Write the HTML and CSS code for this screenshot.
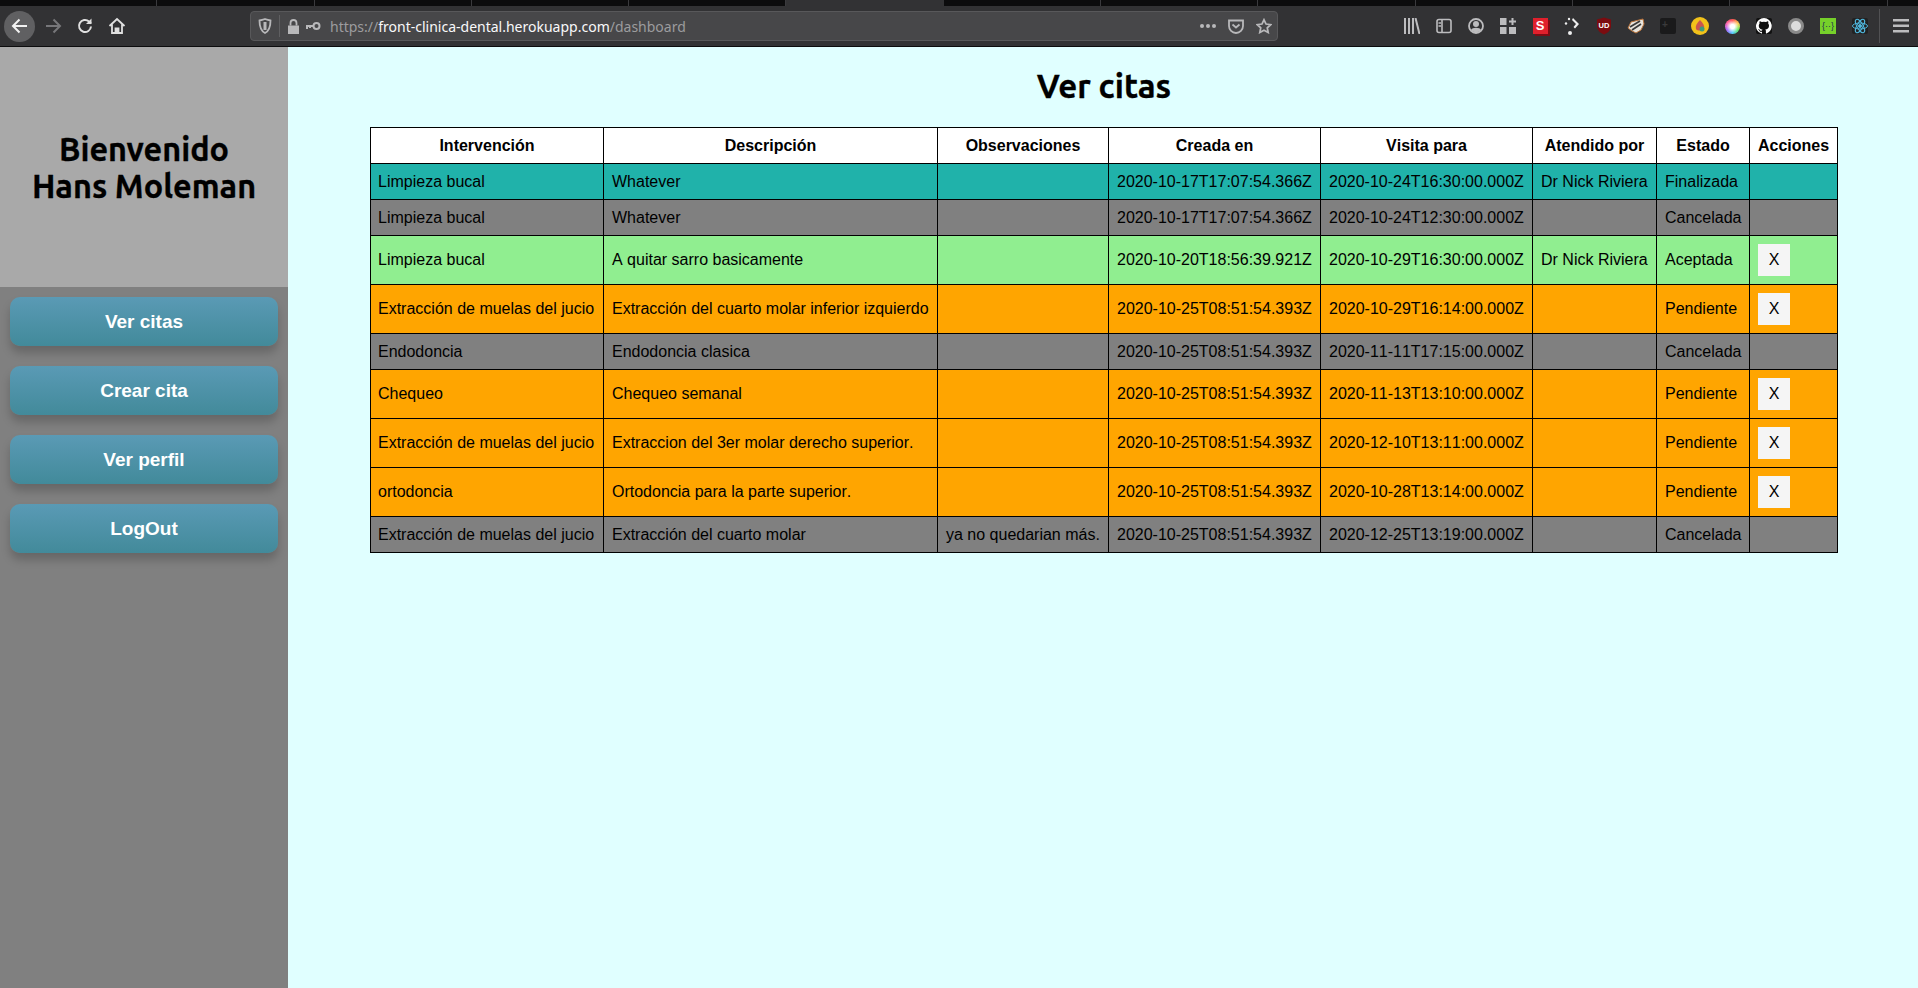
FILE: index.html
```html
<!DOCTYPE html>
<html lang="es">
<head>
  <meta charset="UTF-8" />
  <title>Ver citas</title>
  <link rel="stylesheet" href="styles.css">
</head>
<body>

<!-- Browser chrome -->
<div class="tabstrip">
  <span class="tab-sep"></span><span class="tab-sep"></span><span class="tab-sep"></span><span class="tab-sep"></span>
  <span class="tab-sep"></span><span class="tab-active"></span><span class="tab-sep"></span><span class="tab-sep"></span>
  <span class="tab-sep"></span><span class="tab-sep"></span><span class="tab-sep"></span><span class="tab-sep"></span>
</div>
<div class="toolbar">
  <div class="nav-buttons">
    <span class="back-btn">
      <svg width="20" height="20" viewBox="0 0 20 20" fill="none" stroke="#f2f2f2" stroke-width="2"><path d="M17 10H3M9.500 3.500 3 10l6.500 6.500"/></svg>
    </span>
    <svg class="nav-forward" width="20" height="20" viewBox="0 0 20 20" fill="none" stroke="#77777a" stroke-width="2"><path d="M3 10h14M10.500 3.500 17 10l-6.500 6.500"/></svg>
    <svg class="nav-reload" width="18" height="18" viewBox="0 0 18 18" fill="none" stroke="#e0e0e0" stroke-width="2"><path d="M15 9.500A6 6 0 1 1 13 4.500L15 6.500"/><path d="M15.500 1.500V7H10" fill="#e0e0e0" stroke="none"/></svg>
    <svg class="nav-home" width="18" height="18" viewBox="0 0 18 18" fill="none" stroke="#e0e0e0" stroke-width="1.800"><path d="M1.500 9 9 2l7.500 7M4 7.500V16h10V7.500"/><path d="M7.500 16v-4.500h3V16" fill="#e0e0e0"/></svg>
  </div>
  <div class="urlbar">
    <svg width="14" height="16" viewBox="0 0 14 16" fill="none" stroke="#b8b8ba" stroke-width="1.800"><path d="M1.500 2.500C4 2 5.500 1.500 7 1c1.500.5 3 1 5.500 1.500C12.500 9 11 13 7 15 3 13 1.500 9 1.500 2.500Z"/><path d="M7 4v8" stroke-width="3"/></svg>
    <span class="url-sep"></span>
    <svg width="13" height="15" viewBox="0 0 13 15"><path d="M1 6.500h11V15H1Z" fill="#b8b8ba"/><path d="M3.500 6.500V4a3 3 0 0 1 6 0v2.500" fill="none" stroke="#b8b8ba" stroke-width="1.800"/></svg>
    <svg class="key" width="16" height="10" viewBox="0 0 16 10" fill="none" stroke="#b8b8ba"><circle cx="11.500" cy="5" r="3" stroke-width="2"/><path d="M8 5H1M2 5v3M5 5v2" stroke-width="2"/></svg>
    <span class="url"><span class="url-dim">https://</span>front-clinica-dental.herokuapp.com<span class="url-dim">/dashboard</span></span>
    <svg class="url-dots" width="16" height="4" viewBox="0 0 16 4" fill="#b8b8ba"><circle cx="2" cy="2" r="2"/><circle cx="8" cy="2" r="2"/><circle cx="14" cy="2" r="2"/></svg>
    <svg width="16" height="15" viewBox="0 0 16 15" fill="none" stroke="#b8b8ba" stroke-width="1.800"><path d="M1 1.500h14V7A7 7 0 0 1 1 7Z"/><path d="m4.500 5.500 3.500 3 3.500-3"/></svg>
    <svg class="star" width="16" height="16" viewBox="0 0 18 17" fill="none" stroke="#b8b8ba" stroke-width="2"><path d="m9 1.500 2.300 4.800 5.200.7-3.800 3.600 1 5.200L9 13.300l-4.700 2.500 1-5.200L1.500 7l5.200-.7Z"/></svg>
  </div>
  <div class="addons">
    <svg width="16" height="16" viewBox="0 0 16 16" fill="none" stroke="#bcbcbe" stroke-width="2"><path d="M1 0v16M5 0v16M9 0v16M11.500 0 15.500 16"/></svg>
    <svg width="16" height="16" viewBox="0 0 16 16" fill="none" stroke="#bcbcbe" stroke-width="1.600"><rect x="1" y="1.500" width="14" height="13" rx="2"/><path d="M6 1.500v13M2.500 5H5M2.500 8H5" /></svg>
    <svg width="16" height="16" viewBox="0 0 16 16"><circle cx="8" cy="8" r="7" fill="none" stroke="#bcbcbe" stroke-width="1.800"/><circle cx="8" cy="6" r="3" fill="#bcbcbe"/><path d="M3 12c1-3 9-3 10 0-2 3-8 3-10 0Z" fill="#bcbcbe"/></svg>
    <svg width="16" height="16" viewBox="0 0 16 16" fill="#bcbcbe"><rect x="0" y="0" width="6.500" height="7"/><rect x="0" y="9" width="6.500" height="7"/><rect x="9" y="9" width="7" height="7"/><path d="M11.500 0h2v2.500H16v2h-2.500V7h-2V4.500H9v-2h2.500Z"/></svg>
    <span class="addon-s">S</span>
    <svg width="16" height="18" viewBox="0 0 16 18" fill="#eee"><circle cx="5" cy="2" r="1.200"/><circle cx="2" cy="6.500" r="1.200"/><circle cx="6" cy="16" r="2"/><path d="M9 1l6 6-4 4.500-1.500-1.500L12 7 8 3Z"/></svg>
    <svg width="16" height="18" viewBox="0 0 16 18"><path d="M8 .500 15 2.500V9c0 4-3 7-7 8.500C4 16 1 13 1 9V2.500Z" fill="#7b0c10"/><text x="8" y="10.500" text-anchor="middle" class="ub-text">UD</text></svg>
    <svg width="18" height="16" viewBox="0 0 18 16"><path d="M1 10 4 4l4-1 8-2 1 5-3 6-5 3-4-2Z" fill="#e8e4dc" stroke="#b8723a"/><path d="M3 9l10-6M5 12l9-6" stroke="#3a3a3a" stroke-width="1.800"/></svg>
    <span class="addon-dark"><b>+</b></span>
    <svg width="18" height="18" viewBox="0 0 18 18"><circle cx="9" cy="9" r="9" fill="#f2c21a"/><path d="M9 3c3 3 5 6 4 9-1 2-7 2-8 0-1-3 1-6 4-9Z" fill="#c9564f"/><circle cx="11" cy="12" r="2.500" fill="#3e9a7b"/></svg>
    <span class="addon-wheel"></span>
    <span class="addon-github">
      <svg width="16" height="16" viewBox="0 0 16 16" fill="#fff"><path d="M8 0a8 8 0 0 0-2.500 15.600c.4.100.5-.2.500-.4v-1.400c-2.200.5-2.700-1-2.700-1-.4-.9-.9-1.200-.9-1.200-.7-.5.100-.5.100-.5.800.100 1.200.8 1.200.8.700 1.200 1.900.9 2.300.7.100-.5.300-.9.500-1.100-1.800-.2-3.700-.9-3.700-4 0-.9.300-1.600.8-2.100-.1-.2-.4-1 .1-2.100 0 0 .7-.2 2.200.8a7.600 7.600 0 0 1 4 0c1.500-1 2.200-.8 2.200-.8.400 1.100.200 1.900.100 2.100.5.600.8 1.300.8 2.100 0 3.100-1.900 3.700-3.700 3.900.3.300.6.800.6 1.500v2.200c0 .2.100.5.600.4A8 8 0 0 0 8 0Z"/></svg>
    </span>
    <span class="addon-ring"></span>
    <span class="addon-green">{<i>··</i>}</span>
    <span class="addon-react">
      <svg width="16" height="16" viewBox="-8 -8 16 16" fill="none" stroke="#4fb6dc"><ellipse rx="7.500" ry="3"/><ellipse rx="7.500" ry="3" transform="rotate(60)"/><ellipse rx="7.500" ry="3" transform="rotate(120)"/><circle r="1.500" fill="#4fb6dc"/></svg>
    </span>
  </div>
  <span class="toolbar-sep"></span>
  <svg class="menu-icon" width="16" height="14" viewBox="0 0 16 14" fill="#bcbcbe"><rect width="16" height="2.500"/><rect y="5.500" width="16" height="2.500"/><rect y="11" width="16" height="2.500"/></svg>
</div>

<!-- Page -->
<div class="app">
  <aside class="sidebar">
    <div class="welcome">
      <h2>Bienvenido<br>Hans Moleman</h2>
    </div>
    <nav class="menu">
      <a class="menu-btn">Ver citas</a>
      <a class="menu-btn">Crear cita</a>
      <a class="menu-btn">Ver perfil</a>
      <a class="menu-btn">LogOut</a>
    </nav>
  </aside>

  <main class="content">
    <h1>Ver citas</h1>
    <table class="citas">
      <colgroup>
        <col class="c1"><col class="c2"><col class="c3"><col class="c4"><col class="c5"><col class="c6"><col class="c7"><col class="c8">
      </colgroup>
      <thead>
        <tr>
          <th>Intervención</th><th>Descripción</th><th>Observaciones</th><th>Creada en</th><th>Visita para</th><th>Atendido por</th><th>Estado</th><th>Acciones</th>
        </tr>
      </thead>
      <tbody>
        <tr class="finalizada">
          <td>Limpieza bucal</td><td>Whatever</td><td></td><td>2020-10-17T17:07:54.366Z</td><td>2020-10-24T16:30:00.000Z</td><td>Dr Nick Riviera</td><td>Finalizada</td><td></td>
        </tr>
        <tr class="cancelada">
          <td>Limpieza bucal</td><td>Whatever</td><td></td><td>2020-10-17T17:07:54.366Z</td><td>2020-10-24T12:30:00.000Z</td><td></td><td>Cancelada</td><td></td>
        </tr>
        <tr class="aceptada">
          <td>Limpieza bucal</td><td>A quitar sarro basicamente</td><td></td><td>2020-10-20T18:56:39.921Z</td><td>2020-10-29T16:30:00.000Z</td><td>Dr Nick Riviera</td><td>Aceptada</td><td><button class="x-btn">X</button></td>
        </tr>
        <tr class="pendiente">
          <td>Extracción de muelas del jucio</td><td>Extracción del cuarto molar inferior izquierdo</td><td></td><td>2020-10-25T08:51:54.393Z</td><td>2020-10-29T16:14:00.000Z</td><td></td><td>Pendiente</td><td><button class="x-btn">X</button></td>
        </tr>
        <tr class="cancelada">
          <td>Endodoncia</td><td>Endodoncia clasica</td><td></td><td>2020-10-25T08:51:54.393Z</td><td>2020-11-11T17:15:00.000Z</td><td></td><td>Cancelada</td><td></td>
        </tr>
        <tr class="pendiente">
          <td>Chequeo</td><td>Chequeo semanal</td><td></td><td>2020-10-25T08:51:54.393Z</td><td>2020-11-13T13:10:00.000Z</td><td></td><td>Pendiente</td><td><button class="x-btn">X</button></td>
        </tr>
        <tr class="pendiente">
          <td>Extracción de muelas del jucio</td><td>Extraccion del 3er molar derecho superior.</td><td></td><td>2020-10-25T08:51:54.393Z</td><td>2020-12-10T13:11:00.000Z</td><td></td><td>Pendiente</td><td><button class="x-btn">X</button></td>
        </tr>
        <tr class="pendiente">
          <td>ortodoncia</td><td>Ortodoncia para la parte superior.</td><td></td><td>2020-10-25T08:51:54.393Z</td><td>2020-10-28T13:14:00.000Z</td><td></td><td>Pendiente</td><td><button class="x-btn">X</button></td>
        </tr>
        <tr class="cancelada">
          <td>Extracción de muelas del jucio</td><td>Extracción del cuarto molar</td><td>ya no quedarian más.</td><td>2020-10-25T08:51:54.393Z</td><td>2020-12-25T13:19:00.000Z</td><td></td><td>Cancelada</td><td></td>
        </tr>
      </tbody>
    </table>
  </main>
</div>

</body>
</html>
```

FILE: styles.css
```css
* { box-sizing: border-box; }
html, body { height: 100%; }
body { margin: 0; display: flex; flex-direction: column; overflow: hidden; font-family: "Liberation Sans", Arial, sans-serif; background: #e0ffff; }

/* browser chrome */
.tabstrip { height: 6px; background: #0c0c0d; display: flex; flex: none; }
.tab-sep { width: 157.3px; border-right: 1px solid #3a3a3d; }
.tab-active { width: 157.3px; background: #323234; }
.toolbar { height: 41px; flex: none; background: #323234; border-bottom: 1px solid #0c0c0d; display: flex; align-items: center; }
.nav-buttons { display: flex; align-items: center; width: 250px; padding-left: 4px; }
.back-btn { width: 31px; height: 31px; border-radius: 50%; background: #606062; display: flex; align-items: center; justify-content: center; }
.nav-forward { margin-left: 8px; }
.nav-reload { margin-left: 13px; }
.nav-home { margin-left: 14px; }
.urlbar { width: 1028px; height: 30px; background: #474749; border: 1px solid #58585a; border-radius: 4px; display: flex; align-items: center; padding: 0 5px 0 7px; }
.url-sep { width: 1px; height: 22px; background: #5f5f61; margin: 0 7px 0 7px; }
.key { margin-left: 5px; }
.url { margin-left: 9px; flex: 1; font-family: "Noto Sans", sans-serif; font-size: 14px; color: #f9f9fa; white-space: nowrap; }
.url-dim { color: #9c9c9e; }
.url-dots { margin-right: 12px; }
.star { margin-left: 12px; }
.addons { display: grid; grid-template-columns: repeat(15, 32px); justify-items: center; align-items: center; margin-left: 118px; }
.addon-s { width: 15px; height: 16px; background: #e0202c; color: #fff; font-weight: bold; font-size: 13px; line-height: 16px; text-align: center; box-shadow: 2px 2px 0 #7b0c14; }
.ub-text { font-size: 7.500px; font-weight: bold; fill: #fff; }
.addon-dark { width: 16px; height: 16px; background: #1a1a1b; border-radius: 2px; color: #3a3a3c; font-size: 10px; line-height: 13px; padding-left: 2px; }
.addon-wheel { width: 15px; height: 15px; border-radius: 50%; background: radial-gradient(#fff 0 20%, transparent 60%), conic-gradient(#f55, #fc5, #6e6, #5cf, #a6f, #f6a, #f55); }
.addon-github { width: 16px; height: 16px; background: #111; border-radius: 2px; }
.addon-ring { width: 16px; height: 16px; border-radius: 50%; background: #ddd; border: 3px solid #8a8a8a; }
.addon-green { width: 16px; height: 16px; background: #76d02a; color: #235; font-size: 9px; line-height: 16px; text-align: center; }
.addon-green i { font-style: normal; }
.addon-react { width: 16px; height: 16px; background: #222; border-radius: 2px; }
.toolbar-sep { width: 1px; height: 34px; background: #515153; margin-left: 3px; }
.menu-icon { margin-left: 13px; }

/* layout */
.app { flex: 1; display: flex; min-height: 0; }
.sidebar { width: 288px; flex: none; background: #808080; display: flex; flex-direction: column; }
.welcome { height: 240px; padding-top: 2px; background: #a9a9a9; display: flex; align-items: center; justify-content: center; }
.welcome h2 { margin: 0; font-family: Ubuntu, "Noto Sans", sans-serif; font-size: 32.4px; font-weight: bold; line-height: 37px; text-align: center; color: #000; -webkit-text-stroke: 0.3px #000; }
.menu { display: flex; flex-direction: column; gap: 20px; padding: 10px; }
.menu-btn { height: 49px; border-radius: 10px; background: linear-gradient(#5a9ab5, #428a9a); color: #fff; font-size: 19px; font-weight: bold; display: flex; align-items: center; justify-content: center; box-shadow: 0 7px 10px rgba(0, 0, 0, 0.2); }

.content { flex: 1; min-width: 0; }
.content h1 { margin: 20px 0 22px; padding-left: 2px; height: 38px; font-family: Ubuntu, "Noto Sans", sans-serif; font-size: 33px; line-height: 38px; text-align: center; color: #000; -webkit-text-stroke: 0.3px #000; }

/* table */
.citas { margin-left: 82px; width: 1467px; table-layout: fixed; border-collapse: collapse; border: 1px solid #000; font-size: 16px; font-kerning: none; color: #000; }
.citas th, .citas td { border: 1px solid #000; padding: 8px; height: 36px; white-space: nowrap; text-align: left; }
.citas td:first-child { padding-left: 7px; }
.citas th { background: #fff; text-align: center; }
.c1 { width: 233px; }
.c2 { width: 334px; }
.c3 { width: 171px; }
.c4 { width: 212px; }
.c5 { width: 212px; }
.c6 { width: 124px; }
.c7 { width: 93px; }
.c8 { width: 88px; }
.finalizada td { background: #20b2aa; }
.cancelada td { background: #808080; }
.aceptada td { background: #90ee90; }
.pendiente td { background: #ffa500; }
.x-btn { display: block; width: 32px; height: 32px; padding: 0; border: none; background: #f5f5f5; font-family: "Liberation Sans", Arial, sans-serif; font-size: 16px; color: #000; }
```
